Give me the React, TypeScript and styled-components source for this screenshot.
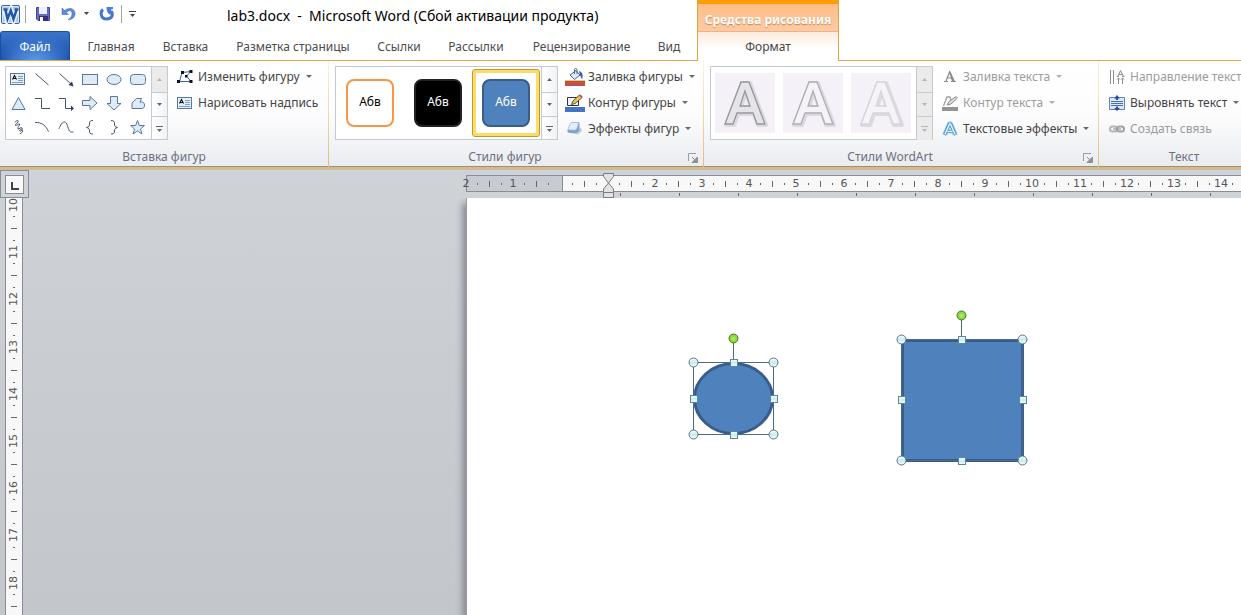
import React from 'react';
import styled, { createGlobalStyle, css } from 'styled-components';

const GlobalStyle = createGlobalStyle`
  * { box-sizing: border-box; }
  html, body { margin: 0; height: 100%; }
  #root { height: 100%; }
  body { overflow: hidden; background: #fff; font-family: "Noto Sans", "Open Sans", sans-serif; font-size: 12px; color: #444; }
  button { font: inherit; color: inherit; border: 0; margin: 0; padding: 0; background: none; }
  svg { display: block; flex: none; }
`;

const Shell = styled.div`
  display: flex;
  flex-direction: column;
  height: 100%;
  overflow: hidden;
`;

/* ---------- window header ---------- */
const Header = styled.header`
  display: flex;
  flex: none;
  height: 61px;
`;
const HeaderMain = styled.div`
  display: flex;
  flex-direction: column;
  flex: none;
`;
const TitleBar = styled.div`
  display: flex;
  align-items: center;
  height: 31px;
  padding: 0 0 4px 1px;
`;
const QuickButton = styled.button<{ $w: number }>`
  display: flex;
  align-items: center;
  justify-content: center;
  width: ${p => p.$w}px;
  height: 24px;
`;
const QuickDivider = styled.span`
  width: 1px;
  height: 18px;
  background: #a3a3a3;
`;
const Title = styled.h1`
  margin: 0 0 0 85px;
  padding-top: 4px;
  font-size: 14px;
  font-weight: 400;
  line-height: 20px;
  color: #000;
  white-space: pre;
`;
const Tabs = styled.nav`
  display: flex;
  height: 30px;
  padding-right: 4px;
  border-bottom: 1px solid #dfa94f;
`;
const Tab = styled.button<{ $w: number }>`
  width: ${p => p.$w}px;
  height: 29px;
  padding-top: 2px;
  white-space: nowrap;
  color: #4c4c4c;
`;
const FileTab = styled(Tab)`
  margin-right: 3px;
  padding-top: 0;
  border: 1px solid #1d4f9f;
  border-bottom: 0;
  border-radius: 3px 3px 0 0;
  color: #fff;
  background: radial-gradient(ellipse at 50% 110%, #5c9be6 0, #3a73c9 45%, transparent 75%), linear-gradient(#3a74ca, #1c4fa8);
`;
const ContextTab = styled.div`
  display: flex;
  flex-direction: column;
  flex: none;
  width: 142px;
  border-left: 1px solid #e2a443;
  border-right: 1px solid #e2a443;
`;
const ContextTitle = styled.div`
  height: 32px;
  padding-top: 6px;
  border-top: 4px solid #ff9d00;
  border-bottom: 1px solid #f3b183;
  background: linear-gradient(#fdbd84, #fbcba5);
  color: #fff;
  font-weight: 700;
  line-height: 20px;
  text-align: center;
  white-space: nowrap;
  text-shadow: 0 1px 1px #c98552;
`;
const ContextButton = styled.button`
  height: 29px;
  background: linear-gradient(#fdebdc, #fff 60%);
`;
const HeaderRest = styled.div`
  flex: 1;
  border-bottom: 1px solid #dfa94f;
`;

/* ---------- ribbon ---------- */
const Ribbon = styled.div`
  display: flex;
  flex: none;
  height: 109px;
  overflow: hidden;
  border-bottom: 3px solid #c9bd9c;
  background: linear-gradient(#fff 0, #fdfdfe 50%, #e9ecf0 99%);
  box-shadow: inset 0 -1px 0 #b98a50;
`;
const Group = styled.section<{ $w: number }>`
  display: flex;
  flex-direction: column;
  flex: none;
  width: ${p => p.$w}px;
  border-right: 1px solid;
  border-image: linear-gradient(#fbf3e2, #e3bd77) 1;
`;
const GroupBody = styled.div<{ $pad?: number }>`
  display: flex;
  height: 84px;
  padding: 5px 0 0 ${p => p.$pad ?? 5}px;
`;
const GroupFoot = styled.div`
  display: flex;
  align-items: center;
  height: 22px;
  padding-top: 1px;
  line-height: 16px;
  text-align: center;
  color: #6b707a;
`;
const GroupName = styled.span`
  flex: 1;
  white-space: nowrap;
`;
const Launcher = styled.button`
  display: flex;
  width: 22px;
  padding: 2px 0 0 7px;
`;
const Gallery = styled.div`
  display: flex;
  height: 74px;
  border: 1px solid #c5cad1;
  background: #fff;
`;
const ShapeGrid = styled.div`
  display: grid;
  grid-template-columns: repeat(6, 24px);
  grid-auto-rows: 24px;
  padding-right: 1px;
`;
const StyleRow = styled.div`
  display: flex;
  padding: 2px 1px 0 0;
`;
const ShapeButton = styled.button`
  display: flex;
  align-items: center;
  justify-content: center;
`;
const Spinner = styled.div<{ $dim?: boolean }>`
  display: grid;
  grid-template-rows: 25px 24px 24px;
  width: 17px;
  height: 74px;
  margin: -1px -1px 0 0;
  border: 1px solid #c5cad1;
  border-radius: 0 2px 2px 0;
  background: ${p => (p.$dim ? '#ebebeb' : 'linear-gradient(90deg, #fff, #f0f2f5)')};
`;
const SpinnerButton = styled.button<{ $off?: boolean }>`
  display: flex;
  align-items: center;
  justify-content: center;
  color: ${p => (p.$off ? '#b5b5b5' : '#666')};
  background: ${p => (p.$off ? '#ebebeb' : 'transparent')};
  & + & { border-top: 1px solid #c5cad1; }
`;
const StyleCell = styled.button<{ $selected?: boolean }>`
  display: flex;
  align-items: center;
  justify-content: center;
  width: 68px;
  height: 68px;
  border-radius: 3px;
  ${p => p.$selected && css`
    border: 1px solid #c29b29;
    box-shadow: inset 0 0 0 3px #fbdc6b;
  `}
`;
const Swatch = styled.span<{ $fill: string; $line: string; $ink: string }>`
  display: flex;
  align-items: center;
  justify-content: center;
  width: 48px;
  height: 48px;
  padding-bottom: 4px;
  border: 2px solid ${p => p.$line};
  border-radius: 8px;
  background: ${p => p.$fill};
  color: ${p => p.$ink};
`;
const WordArtRow = styled.div`
  display: flex;
  gap: 8px;
  padding: 6px 5px 0 4px;
`;
const WordArtCell = styled.button`
  width: 60px;
  height: 60px;
  background: #f5f1f8;
`;
const Commands = styled.div<{ $gap: number }>`
  display: flex;
  flex-direction: column;
  margin: -2px 0 0 ${p => p.$gap}px;
`;
const Command = styled.button<{ $icon: number }>`
  display: grid;
  grid-template-columns: ${p => p.$icon}px auto auto;
  align-items: center;
  justify-content: start;
  height: 26px;
  line-height: 20px;
  white-space: nowrap;
  &:disabled { color: #9c9c9c; }
`;
const Caret = styled.span`
  margin: 0 0 2px 6px;
  border: 3px solid transparent;
  border-top-color: currentColor;
  border-bottom-width: 0;
  opacity: .8;
`;

/* ---------- rulers and document ---------- */
const Workspace = styled.main`
  display: flex;
  flex: 1;
  min-height: 0;
  background: linear-gradient(#cfd2d7, #c9ccd1 45%, #c3c6ca);
`;
const LeftRail = styled.div`
  display: flex;
  flex-direction: column;
  flex: none;
  width: 29px;
`;
const TabSelector = styled.button`
  display: flex;
  align-items: center;
  justify-content: center;
  flex: none;
  width: 29px;
  height: 28px;
  border: 1px solid #878d96;
  background: #cfd2d7;
`;
const VRuler = styled.div`
  flex: 1;
  width: 18px;
  min-height: 0;
  margin-left: 5px;
  padding-top: 7px;
  overflow: hidden;
  border: 1px solid #878d96;
  border-width: 0 1px;
  background: #f8f8f9;
  color: #555;
  font: 11px "DejaVu Sans", sans-serif;
`;
const VCell = styled.div<{ $size: number }>`
  display: grid;
  grid-template-rows: repeat(4, 1fr);
  height: ${p => p.$size}px;
`;
const VMark = styled.span`
  display: flex;
  align-items: center;
  justify-content: center;
  height: 0;
`;
const VNumber = styled.span`
  writing-mode: vertical-rl;
  transform: rotate(180deg);
  line-height: 16px;
`;
const Dash = styled.i<{ $w: number; $h: number }>`
  flex: none;
  width: ${p => p.$w}px;
  height: ${p => p.$h}px;
  background: #666;
`;
const Sheet = styled.div`
  display: flex;
  flex-direction: column;
  flex: 1;
  min-width: 0;
  padding-left: 437px;
`;
const HRulerArea = styled.div`
  flex: none;
  height: 28px;
  padding-top: 5px;
`;
const HRuler = styled.div`
  position: relative;
  display: flex;
  height: 17px;
  border: 1px solid #878d96;
  border-width: 1px 0;
  background: linear-gradient(90deg, #878d96 1px, #c8cbd0 1px, #c8cbd0 96px, #878d96 96px, #878d96 97px, #f8f8f9 97px);
  color: #555;
  font: 11px "DejaVu Sans", sans-serif;
`;
const HCell = styled.div<{ $size: number }>`
  display: grid;
  grid-template-columns: repeat(4, 1fr);
  align-items: center;
  flex: none;
  width: ${p => p.$size}px;
`;
const HMark = styled.span`
  display: flex;
  align-items: center;
  justify-content: center;
  width: 0;
  line-height: 15px;
`;
const IndentMarker = styled.svg`
  position: absolute;
  left: 137px;
  top: -4px;
`;
const StopRow = styled.div`
  display: flex;
  gap: 58px;
  padding: 1px 0 0 154px;
`;
const Page = styled.article`
  position: relative;
  flex: 1;
  margin-left: 1px;
  background: #fff;
  box-shadow: -1px 0 0 #9a9ea4, -3px 6px 7px 1px #80848a;
  clip-path: inset(0 0 0 -12px);
`;
const DrawnShape = styled.svg<{ $x: number; $y: number }>`
  position: absolute;
  left: ${p => p.$x}px;
  top: ${p => p.$y}px;
`;

/* ---------- icons ---------- */
const ink = '#44546a';
const pale = '#dcebf7';
const edge = '#5c7896';

const Icon = ({ size = 16, w, children }: { size?: number; w?: number; children: React.ReactNode }) => (
  <svg width={w ?? size} height={size} viewBox={`0 0 ${w ?? size} ${size}`} fill="none" aria-hidden="true">{children}</svg>
);

const TextBoxIcon = () => (
  <Icon>
    <rect x=".5" y="2.500" width="14" height="11" fill="#e6f0f8" stroke={edge} />
    <path d="M2.500 8.500 4.500 4.500 6.500 8.500M3 7.500H6" stroke="#111" strokeWidth="1.100" />
    <path d="M8 5.500H13M8 7.500H13M8 9.500H13M2 11.500H13" stroke="#7ba0c8" />
  </Icon>
);

const shapes: { name: string; art: React.ReactNode }[] = [
  { name: 'Надпись', art: <TextBoxIcon /> },
  { name: 'Линия', art: <Icon><path d="M1.500 2.500 14.500 14" stroke={ink} /></Icon> },
  { name: 'Стрелка', art: <Icon><path d="M1.500 2.500 13 13" stroke={ink} /><path d="M15.500 15.500 10.500 14 14 10.500Z" fill="#2c3c55" /></Icon> },
  { name: 'Прямоугольник', art: <Icon><rect x=".5" y="3.500" width="15" height="10" fill={pale} stroke={edge} /></Icon> },
  { name: 'Овал', art: <Icon><ellipse cx="8" cy="8.500" rx="7" ry="5" fill={pale} stroke={edge} /></Icon> },
  { name: 'Скругленный прямоугольник', art: <Icon><rect x=".5" y="3.500" width="15" height="10" rx="3" fill={pale} stroke={edge} /></Icon> },
  { name: 'Треугольник', art: <Icon><path d="M8.500 2.500 15 14.500H2Z" fill={pale} stroke={edge} /></Icon> },
  { name: 'Соединитель', art: <Icon><path d="M1 3.500H7.500V13.500H16" stroke={ink} /></Icon> },
  { name: 'Соединитель со стрелкой', art: <Icon><path d="M1 3.500H7.500V13.500H13" stroke={ink} /><path d="M16 13.500 13 10.500V16Z" fill="#2c3c55" /></Icon> },
  { name: 'Стрелка вправо', art: <Icon><path d="M.5 5.500H8V1.500L15 8 8 14.500V10.500H.5Z" fill={pale} stroke={edge} /></Icon> },
  { name: 'Стрелка вниз', art: <Icon><path d="M4.500 1.500H11.500V8.500H15L8 15 1 8.500H4.500Z" fill={pale} stroke={edge} /></Icon> },
  { name: 'Полилиния', art: <Icon><path d="M2 13.500V8L6.500 3.500H11.500L10 7.500C12 6 14.500 7.500 14.500 10C14.500 13 13 13.500 11 13.500Z" fill={pale} stroke={edge} /></Icon> },
  { name: 'Рисованная кривая', art: <Icon><path d="M5 3.500C6 1 9 1 8 3C7 5 5 5 5.500 6.500C7 7 9 4 9.500 5C10 7 7 8 8 10C9 10.500 11 7.500 12 9C13 11.500 9.500 13 9.500 11.500C10 10 13.500 10.500 12.500 13C12 14 10.500 13.500 10 15" stroke={ink} /></Icon> },
  { name: 'Дуга', art: <Icon><path d="M1 3.500C8 3 12 7 14.500 12.500" stroke={ink} /></Icon> },
  { name: 'Кривая', art: <Icon><path d="M.5 10C2 9 3 3 6.500 3C9.500 3 9.500 9 11.500 12C12.500 13.500 14 13 15.500 13" stroke={ink} /></Icon> },
  { name: 'Левая фигурная скобка', art: <Icon><path d="M11 1.500C8 1.500 7.500 2.500 7.500 5C7.500 7 7 8 4.500 8.500C7 9 7.500 10 7.500 12C7.500 14 8 15 11 15" stroke={ink} /></Icon> },
  { name: 'Правая фигурная скобка', art: <Icon><path d="M5 1.500C8 1.500 8.500 2.500 8.500 5C8.500 7 9 8 11.500 8.500C9 9 8.500 10 8.500 12C8.500 14 8 15 5 15" stroke={ink} /></Icon> },
  { name: 'Звезда', art: <Icon><path d="M7.500 1.500 9.300 6.500H14.500L10.500 10 12 15 7.500 12 3 15 4.500 10 .7 6.500H5.700Z" fill={pale} stroke={edge} /></Icon> },
];

const EditShapeIcon = () => (
  <Icon>
    <path d="M5 3.500 14 2.500 9.500 7 14 12.500H2.500L5 3.500" stroke="#3a62b0" />
    <path d="M4 2H7V5H4ZM12.500 1H15.500V4H12.500ZM0 11H3V14H0ZM12.500 11H15.500V14H12.500ZM8 6H10.500V8.500H8Z" fill="#111" />
  </Icon>
);
const FillIcon = () => (
  <Icon w={20} size={18}>
    <path d="M5 7 11 2.500 15 7 9.500 11.500Z" fill="#dcebf7" stroke="#46688c" />
    <path d="M9.500 6V1.500C9.500 0 12 0 12 2V6" stroke="#46688c" />
    <path d="M14 3C18 4 18 8 17 11.500L15 7Z" fill="#2f60a8" />
    <rect y="12" width="20" height="2" fill="#f0ca4e" />
    <rect y="13" width="20" height="5" fill="#c0504d" />
  </Icon>
);
const OutlineIcon = () => (
  <Icon w={20} size={18}>
    <path d="M2.500 3.500H13.500V11.500H2.500Z" fill="#eef4fb" stroke="#333" />
    <path d="M6.500 10.500 8 7 14.500 1 17 3.500 10 9.500Z" fill="#f0c75f" stroke="#5d4c2a" />
    <path d="M14 1.500 15.500.5 17.500 2.500 16.500 4Z" fill="#c0504d" />
    <rect y="13" width="20" height="5" fill="#4472c4" />
  </Icon>
);
const EffectsIcon = () => (
  <Icon w={20} size={18}>
    <path d="M5 13 13 14.500 17 11 16 8Z" fill="#c6c9d0" />
    <path d="M5.500 3C6 2 7 2 8 2H12.500C14 2 14.500 2.500 14.500 4V9C14.500 11 12.500 13 10.500 13H5C3 13 2 12 2.500 10Z" fill="#7f9fd6" />
    <path d="M7 2.500H12C13.500 2.500 13.500 3.500 13 5L12 8C11.500 9.500 11 10 9.500 10H4.500C3 10 3 9 3.500 8L5 4C5.500 3 6 2.500 7 2.500Z" fill="#e3edfb" stroke="#a5bfe6" strokeWidth=".7" />
  </Icon>
);
const SerifA = () => (
  <Icon><path d="M2 12.500H6M9 12.500H14M4 12 7.500 3 11 12M5 9H10" stroke="#8b8b8b" strokeWidth="1.200" /><path d="M7 2.500H8.500L13 12.500H10Z" fill="#8b8b8b" /></Icon>
);
const TextOutlineIcon = () => (
  <Icon>
    <path d="M1.500 11 5 2H8L9 6" stroke="#a0a0a0" strokeWidth="1.300" />
    <path d="M5 10 7 6.500 14 1.500 15.500 3 9 9Z" fill="#ddd" stroke="#888" />
    <rect y="12" width="16" height="4" fill="#949494" />
  </Icon>
);
const GlowA = () => (
  <Icon>
    <path d="M3 13.500 7.500 3H8.500L13 13.500M5.500 10H10.500" stroke="#b4dcf5" strokeWidth="5.500" strokeLinejoin="round" />
    <path d="M2.500 14 7.300 3H8.700L13.500 14M5 10.500H11" stroke="#3f8fc4" strokeWidth="3.200" />
    <path d="M2.800 13.500 7.500 3H8.500L13.200 13.500M5.500 10.500H10.500" stroke="#e8f6ff" strokeWidth="1.500" />
  </Icon>
);
const DirectionIcon = () => (
  <Icon><path d="M1.500 1V15M4.500 1V15M9.500 9V15M8 10.500 9.500 9 11 10.500M13.500 9V15M12 10.500 13.500 9 15 10.500" stroke="#8d8d8d" /><path d="M9 7.500 11.500 1.500 14.500 7.500M10 5.500H13.500M8 7.500H10M13 7.500H15.500" stroke="#8d8d8d" /></Icon>
);
const AlignIcon = () => (
  <Icon><path d="M.5 2.500H15.500V14.500H.5Z" fill="#dce8f8" stroke="#5f83bd" /><path d="M2 6.500H14M2 8.500H14M2 10.500H14" stroke="#4d70ad" /><path d="M8 0 11 3.500H9V5H7V3.500H5ZM8 16 11 13H9V11.500H7V13H5Z" fill="#2b4fa0" /></Icon>
);
const LinkIcon = () => (
  <Icon><rect x="1" y="5.500" width="7" height="5" rx="2.500" stroke="#b5b5b5" strokeWidth="2" /><rect x="8" y="5.500" width="7" height="5" rx="2.500" stroke="#a2a2a2" strokeWidth="2" /><path d="M4 8H12" stroke="#999" strokeWidth="1.200" /></Icon>
);
const ArrowUp = () => <Icon w={5} size={3}><path d="M0 3 2.500 0 5 3Z" fill="currentColor" /></Icon>;
const ArrowDown = () => <Icon w={5} size={3}><path d="M0 0 2.500 3 5 0Z" fill="currentColor" /></Icon>;
const ArrowMore = () => <Icon w={7} size={6}><path d="M0 .5H7" stroke="currentColor" /><path d="M1 3 3.500 6 6 3Z" fill="currentColor" /></Icon>;
const LaunchIcon = () => <Icon size={10}><path d="M.5 8V.5H8" stroke="#9a9ea5" /><path d="M9.500 4V9.500H4ZM4 4 8 8" fill="#8b9097" stroke="#8b9097" /></Icon>;

const WordLogo = () => (
  <Icon size={20}>
    <rect x=".5" y="1.500" width="18" height="18" rx="1.500" fill="#d8e7f7" stroke="#39629f" />
    <rect x="2" y="3" width="15" height="15" fill="#a9c8ea" />
    <path d="M3.500 5.500 6 15.500 10 6 12.500 15.500 16 5.500" stroke="#e8f2fc" strokeWidth="5" />
    <path d="M2.500 5.500H6.500M4.500 6 6.500 15 9.800 6.500 12.500 15 15.500 6M13.500 5.500H17.500" stroke="#2459a8" strokeWidth="2.500" />
  </Icon>
);
const SaveIcon = () => (
  <Icon>
    <path d="M1.500 1.500H14.500V14.500H3L1.500 13Z" fill="#6668c6" stroke="#4746a5" />
    <rect x="4" y="1" width="8" height="7" fill="#edf1fb" />
    <rect x="4" y="10" width="9" height="5" fill="#30307c" />
    <rect x="5" y="11" width="3" height="4" fill="#fff" />
  </Icon>
);
const UndoIcon = () => (
  <Icon><path d="M1 2V8.500H7.500L5.500 6.500C8 4 11 4 11 7.500C11 10 10 12 7 13.500C11 14 14.500 11 14 7C13.500 2 8 1 3.500 4.500Z" fill="#5c8ade" stroke="#3463b5" strokeWidth=".5" /></Icon>
);
const RedoIcon = () => (
  <Icon><path d="M4 3.500C1 6 1.500 13 7.500 13C13.500 13 14.500 8 12 5" stroke="#4476d0" strokeWidth="3" /><path d="M7.500 1H14V3L12 3.500V8.500H10.500C8 6.500 7.500 4 7.500 1Z" fill="#4c7fd6" /></Icon>
);

const outlineA = 'M10 51 26 9H34L50 51H42L38 40H22L18 51ZM25 33H35L30 18Z';

/* ---------- small pieces ---------- */
const GallerySpinner = ({ dim, topOff }: { dim?: boolean; topOff?: boolean }) => (
  <Spinner $dim={dim}>
    <SpinnerButton $off={dim || topOff} aria-label="Вверх"><ArrowUp /></SpinnerButton>
    <SpinnerButton $off={dim} aria-label="Вниз"><ArrowDown /></SpinnerButton>
    <SpinnerButton $off={dim} aria-label="Дополнительно"><ArrowMore /></SpinnerButton>
  </Spinner>
);

type CommandProps = { icon: React.ReactNode; slot: number; label: string; menu?: boolean; disabled?: boolean };
const CommandItem = ({ icon, slot, label, menu, disabled }: CommandProps) => (
  <Command $icon={slot} disabled={disabled}>
    {icon}
    <span>{label}</span>
    {menu && <Caret />}
  </Command>
);

const GroupFooter = ({ name, launcher }: { name: string; launcher?: boolean }) => (
  <GroupFoot>
    <GroupName>{name}</GroupName>
    {launcher && <Launcher aria-label={`Параметры: ${name}`}><LaunchIcon /></Launcher>}
  </GroupFoot>
);

const tabs: [string, number][] = [
  ['Главная', 76], ['Вставка', 73], ['Разметка страницы', 142], ['Ссылки', 70],
  ['Рассылки', 84], ['Рецензирование', 127], ['Вид', 48],
];

const cellSize = (i: number) => (i % 5 === 2 ? 48 : 47);
const hNumbers = ['2', '1', '', '', '2', '3', '4', '5', '6', '7', '8', '9', '10', '11', '12', '13', '14'];
const vNumbers = Array.from({ length: 9 }, (_, i) => String(i + 10));

/* A selected drawing: outline frame, eight sizing handles and a rotation knob */
const Selected = ({ x, y, w, h, round }: { x: number; y: number; w: number; h: number; round?: boolean }) => {
  const l = 6.5, t = 30.5, r = l + w, b = t + h, cx = l + Math.floor(w / 2), cy = t + Math.floor(h / 2);
  return (
    <DrawnShape $x={x} $y={y} width={w + 14} height={h + 38} fill="none">
      <defs>
        <linearGradient id="handle" x2="0" y2="1"><stop stopColor="#f4fdff" /><stop offset=".5" stopColor="#c9ebf0" /><stop offset="1" stopColor="#f4fdff" /></linearGradient>
        <radialGradient id="knob"><stop stopColor="#b6f06a" /><stop offset="1" stopColor="#72cf24" /></radialGradient>
      </defs>
      {round
        ? <ellipse cx={cx} cy={cy} rx={w / 2 - 1} ry={h / 2 - 1} fill="#4f81bd" stroke="#385d8a" strokeWidth="3" />
        : <rect x={l + 1} y={t + 1} width={w - 1} height={h - 1} fill="#4f81bd" stroke="#385d8a" strokeWidth="3" />}
      <path d={`M${l} ${t}H${r}V${b}H${l}ZM${cx} 7V${t}`} stroke="#4a6a88" />
      {[[l, t], [r, t], [l, b], [r, b]].map(([px, py]) => (
        <circle key={`${px}-${py}`} cx={px} cy={py} r="4.500" fill="url(#handle)" stroke="#5b7484" />
      ))}
      {[[cx, t], [l, cy], [r, cy], [cx, b]].map(([px, py]) => (
        <rect key={`${px}-${py}`} x={px - 3} y={py - 3} width="7" height="7" fill="url(#handle)" stroke="#5d8798" />
      ))}
      <circle cx={cx} cy="6.500" r="4.500" fill="url(#knob)" stroke="#56703f" />
    </DrawnShape>
  );
};

export default function App() {
  return (
    <Shell>
      <GlobalStyle />
      <Header>
        <HeaderMain>
          <TitleBar>
            <QuickButton $w={20} aria-label="Word"><WordLogo /></QuickButton>
            <QuickButton $w={4} aria-label="Системное меню" />
            <QuickDivider />
            <QuickButton $w={33} aria-label="Сохранить"><SaveIcon /></QuickButton>
            <QuickButton $w={20} aria-label="Отменить"><UndoIcon /></QuickButton>
            <QuickButton $w={14} aria-label="Список отмены"><ArrowDown /></QuickButton>
            <QuickButton $w={28} aria-label="Вернуть"><RedoIcon /></QuickButton>
            <QuickDivider />
            <QuickButton $w={20} aria-label="Настройка панели"><ArrowMore /></QuickButton>
            <Title>{'lab3.docx  -  Microsoft Word (Сбой активации продукта)'}</Title>
          </TitleBar>
          <Tabs>
            <FileTab $w={70}>Файл</FileTab>
            {tabs.map(([name, width]) => <Tab key={name} $w={width}>{name}</Tab>)}
          </Tabs>
        </HeaderMain>
        <ContextTab>
          <ContextTitle>Средства рисования</ContextTitle>
          <ContextButton>Формат</ContextButton>
        </ContextTab>
        <HeaderRest />
      </Header>

      <Ribbon>
        <Group $w={329}>
          <GroupBody>
            <Gallery>
              <ShapeGrid>
                {shapes.map(s => <ShapeButton key={s.name} aria-label={s.name}>{s.art}</ShapeButton>)}
              </ShapeGrid>
              <GallerySpinner topOff />
            </Gallery>
            <Commands $gap={9}>
              <CommandItem slot={21} icon={<EditShapeIcon />} label="Изменить фигуру" menu />
              <CommandItem slot={21} icon={<TextBoxIcon />} label="Нарисовать надпись" />
            </Commands>
          </GroupBody>
          <GroupFooter name="Вставка фигур" />
        </Group>

        <Group $w={375}>
          <GroupBody $pad={6}>
            <Gallery>
              <StyleRow>
                <StyleCell><Swatch $fill="#fff" $line="#f79646" $ink="#000">Абв</Swatch></StyleCell>
                <StyleCell><Swatch $fill="#000" $line="#222" $ink="#fff">Абв</Swatch></StyleCell>
                <StyleCell $selected><Swatch $fill="#4f81bd" $line="#385d8a" $ink="#fff">Абв</Swatch></StyleCell>
              </StyleRow>
              <GallerySpinner />
            </Gallery>
            <Commands $gap={7}>
              <CommandItem slot={23} icon={<FillIcon />} label="Заливка фигуры" menu />
              <CommandItem slot={23} icon={<OutlineIcon />} label="Контур фигуры" menu />
              <CommandItem slot={23} icon={<EffectsIcon />} label="Эффекты фигур" menu />
            </Commands>
          </GroupBody>
          <GroupFooter name="Стили фигур" launcher />
        </Group>

        <Group $w={395}>
          <GroupBody $pad={6}>
            <Gallery>
              <WordArtRow>
                {['#96969b', '#adadb2', '#d6d6da'].map((line, i) => (
                  <WordArtCell key={line} aria-label={`Стиль WordArt ${i + 1}`}>
                    <svg width="60" height="60" fill="none" fillRule="evenodd">
                      <path d={outlineA} transform="translate(1 1)" stroke="#ddd9e2" strokeWidth="4" strokeLinejoin="round" />
                      <path d={outlineA} fill={i === 0 ? '#e5e4e8' : '#f5f3f7'} stroke={line} strokeWidth="1.300" />
                    </svg>
                  </WordArtCell>
                ))}
              </WordArtRow>
              <GallerySpinner dim />
            </Gallery>
            <Commands $gap={9}>
              <CommandItem slot={21} icon={<SerifA />} label="Заливка текста" menu disabled />
              <CommandItem slot={21} icon={<TextOutlineIcon />} label="Контур текста" menu disabled />
              <CommandItem slot={21} icon={<GlowA />} label="Текстовые эффекты" menu />
            </Commands>
          </GroupBody>
          <GroupFooter name="Стили WordArt" launcher />
        </Group>

        <Group $w={171}>
          <GroupBody $pad={0}>
            <Commands $gap={10}>
              <CommandItem slot={21} icon={<DirectionIcon />} label="Направление текст" disabled />
              <CommandItem slot={21} icon={<AlignIcon />} label="Выровнять текст" menu />
              <CommandItem slot={21} icon={<LinkIcon />} label="Создать связь" disabled />
            </Commands>
          </GroupBody>
          <GroupFooter name="Текст" />
        </Group>
      </Ribbon>

      <Workspace>
        <LeftRail>
          <TabSelector aria-label="Тип табуляции">
            <Icon size={19}>
              <rect x=".5" y=".5" width="18" height="18" fill="#f8f8f9" stroke="#878d96" />
              <path d="M7 7V14H14" stroke="#444" strokeWidth="2" />
            </Icon>
          </TabSelector>
          <VRuler>
            {vNumbers.map((n, i) => (
              <VCell key={n} $size={cellSize(i)}>
                <VMark><VNumber>{n}</VNumber></VMark>
                <VMark><Dash $w={2} $h={1} /></VMark>
                <VMark><Dash $w={6} $h={1} /></VMark>
                <VMark><Dash $w={2} $h={1} /></VMark>
              </VCell>
            ))}
          </VRuler>
        </LeftRail>
        <Sheet>
          <HRulerArea>
            <HRuler>
              {hNumbers.map((n, i) => (
                <HCell key={i} $size={cellSize(i)}>
                  <HMark>{n}</HMark>
                  <HMark><Dash $w={1} $h={2} /></HMark>
                  <HMark><Dash $w={1} $h={6} /></HMark>
                  <HMark><Dash $w={1} $h={2} /></HMark>
                </HCell>
              ))}
              <IndentMarker width="11" height="27" fill="#e2e2e4" stroke="#7b7b80">
                <path d="M.5 1.500H10.500V4.500L5.500 11 .5 4.500ZM5.500 11 10.500 17V20.500H.5V17ZM.5 20.500H10.500V25.500H.5Z" />
              </IndentMarker>
            </HRuler>
            <StopRow>
              {Array.from({ length: 11 }, (_, i) => <Dash key={i} $w={1} $h={3} />)}
            </StopRow>
          </HRulerArea>
          <Page>
            <Selected x={220} y={134} w={80} h={72} round />
            <Selected x={428} y={111} w={121} h={121} />
          </Page>
        </Sheet>
      </Workspace>
    </Shell>
  );
}
